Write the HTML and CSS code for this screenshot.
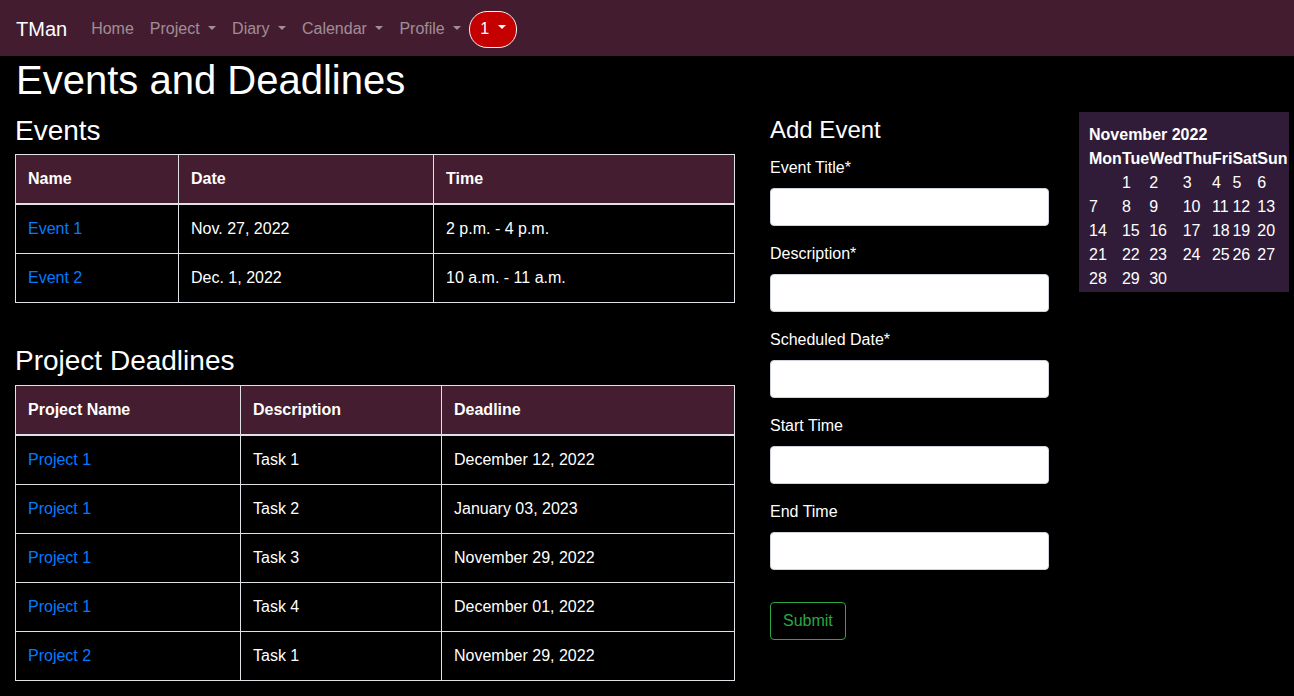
FILE: index.html
```html
<!DOCTYPE html>
<html lang="en">
<head>
<meta charset="utf-8">
<title>TMan - Events and Deadlines</title>
<link rel="stylesheet" href="styles.css">
</head>
<body>
<nav class="navbar">
  <a class="brand" href="#">TMan</a>
  <ul class="nav">
    <li><a class="nav-link" href="#">Home</a></li>
    <li><a class="nav-link dropdown" href="#">Project</a></li>
    <li><a class="nav-link dropdown" href="#">Diary</a></li>
    <li><a class="nav-link dropdown" href="#">Calendar</a></li>
    <li><a class="nav-link dropdown" href="#">Profile</a></li>
    <li><a class="nav-link dropdown notif" href="#">1</a></li>
  </ul>
</nav>

<h1 class="page-title">Events and Deadlines</h1>

<div class="row">
  <div class="col-main">
    <h3 class="section-title">Events</h3>
    <table class="table">
      <thead>
        <tr><th class="c1">Name</th><th class="c2">Date</th><th>Time</th></tr>
      </thead>
      <tbody>
        <tr><td><a href="#">Event 1</a></td><td>Nov. 27, 2022</td><td>2 p.m. - 4 p.m.</td></tr>
        <tr><td><a href="#">Event 2</a></td><td>Dec. 1, 2022</td><td>10 a.m. - 11 a.m.</td></tr>
      </tbody>
    </table>
    <div class="spacer"></div>
    <h3 class="section-title section-title-projects">Project Deadlines</h3>
    <table class="table">
      <thead>
        <tr><th class="p1">Project Name</th><th class="p2">Description</th><th>Deadline</th></tr>
      </thead>
      <tbody>
        <tr><td><a href="#">Project 1</a></td><td>Task 1</td><td>December 12, 2022</td></tr>
        <tr><td><a href="#">Project 1</a></td><td>Task 2</td><td>January 03, 2023</td></tr>
        <tr><td><a href="#">Project 1</a></td><td>Task 3</td><td>November 29, 2022</td></tr>
        <tr><td><a href="#">Project 1</a></td><td>Task 4</td><td>December 01, 2022</td></tr>
        <tr><td><a href="#">Project 2</a></td><td>Task 1</td><td>November 29, 2022</td></tr>
      </tbody>
    </table>
  </div>

  <div class="col-form">
    <h4 class="form-title">Add Event</h4>
    <form class="event-form">
      <div class="form-group">
        <label>Event Title*</label>
        <input class="form-control" type="text">
      </div>
      <div class="form-group">
        <label>Description*</label>
        <input class="form-control" type="text">
      </div>
      <div class="form-group">
        <label>Scheduled Date*</label>
        <input class="form-control" type="text">
      </div>
      <div class="form-group">
        <label>Start Time</label>
        <input class="form-control" type="text">
      </div>
      <div class="form-group">
        <label>End Time</label>
        <input class="form-control" type="text">
      </div>
      <button class="btn-submit" type="button">Submit</button>
    </form>
  </div>

  <div class="col-cal">
    <div class="calendar">
      <table class="month">
        <tr><th colspan="7" class="month-name">November 2022</th></tr>
        <tr><th>Mon</th><th>Tue</th><th>Wed</th><th>Thu</th><th>Fri</th><th>Sat</th><th>Sun</th></tr>
        <tr><td></td><td>1</td><td>2</td><td>3</td><td>4</td><td>5</td><td>6</td></tr>
        <tr><td>7</td><td>8</td><td>9</td><td>10</td><td>11</td><td>12</td><td>13</td></tr>
        <tr><td>14</td><td>15</td><td>16</td><td>17</td><td>18</td><td>19</td><td>20</td></tr>
        <tr><td>21</td><td>22</td><td>23</td><td>24</td><td>25</td><td>26</td><td>27</td></tr>
        <tr><td>28</td><td>29</td><td>30</td><td></td><td></td><td></td><td></td></tr>
      </table>
    </div>
  </div>
</div>
</body>
</html>
```

FILE: styles.css
```css
* { box-sizing: border-box; }

html, body {
  margin: 0;
  padding: 0;
  background: #000;
  color: #fff;
  font-family: "Liberation Sans", Arial, sans-serif;
  font-size: 16px;
  line-height: 1.5;
}

a { text-decoration: none; }

/* Navbar */
.navbar {
  height: 56px;
  background: #431c2f;
  display: flex;
  align-items: center;
  padding: 9px 16px 7px;
}
.brand {
  color: #fff;
  font-size: 20px;
  line-height: 30px;
  margin-right: 16px;
}
.nav {
  list-style: none;
  display: flex;
  align-items: center;
  margin: 0;
  padding: 0;
}
.nav-link {
  display: block;
  padding: 8px;
  color: rgba(255, 255, 255, 0.5);
  line-height: 24px;
}
.dropdown::after {
  content: "";
  display: inline-block;
  margin-left: 8.5px;
  vertical-align: 0.255em;
  border-top: 0.3em solid;
  border-right: 0.3em solid transparent;
  border-left: 0.3em solid transparent;
  border-bottom: 0;
}
.notif {
  background: #c40000;
  color: #fff;
  border: 1px solid #f3f3f3;
  border-radius: 18px;
  padding: 5px 10px 6px;
}

/* Page */
.page-title {
  margin: 0 0 8px;
  padding-left: 16px;
  font-size: 40px;
  font-weight: 400;
  line-height: 1.2;
}

.row {
  display: flex;
  align-items: flex-start;
  padding-left: 15px;
}

.col-main { width: 720px; }
.col-form { width: 279px; margin-left: 35px; }
.col-cal { margin-left: 30px; }

.section-title {
  margin: 0 0 6px;
  padding-top: 2px;
  font-size: 28px;
  font-weight: 400;
  line-height: 1.2;
}
.section-title-projects { margin-bottom: 8px; }

.spacer { height: 23px; }

.table {
  width: 720px;
  border-collapse: collapse;
  margin-bottom: 16px;
  color: #fff;
}
.table th, .table td {
  border: 1px solid #dee2e6;
  padding: 12px;
  text-align: left;
  vertical-align: top;
  line-height: 24px;
}
.table thead th {
  background: #441d30;
  border-bottom: 2px solid #dee2e6;
  font-weight: 700;
}
.table a { color: #007bff; }
.c1 { width: 163px; }
.c2 { width: 255px; }
.p1 { width: 225px; }
.p2 { width: 201px; }

/* Form */
.form-title {
  margin: 0 0 11px;
  padding-top: 4px;
  font-size: 24px;
  font-weight: 400;
  line-height: 1.2;
}
.form-group { margin-bottom: 16px; }
.form-group label {
  display: block;
  margin-bottom: 8px;
  line-height: 24px;
}
.form-control {
  display: block;
  width: 100%;
  height: 38px;
  padding: 6px 12px;
  font-size: 16px;
  font-family: inherit;
  background: #fff;
  border: 1px solid #ced4da;
  border-radius: 4px;
}
.btn-submit {
  margin-top: 16px;
  font-family: inherit;
  font-size: 16px;
  line-height: 24px;
  padding: 6px 12px;
  color: #28a745;
  background: transparent;
  border: 1px solid #28a745;
  border-radius: 4px;
}

/* Calendar */
.calendar {
  width: 210px;
  background: #301c38;
  padding: 11px 0 1px 10px;
}
.month {
  border-collapse: collapse;
  border-spacing: 0;
}
.month th, .month td {
  padding: 0;
  text-align: left;
  line-height: 24px;
  white-space: nowrap;
}
.month th { font-weight: 700; }
```
